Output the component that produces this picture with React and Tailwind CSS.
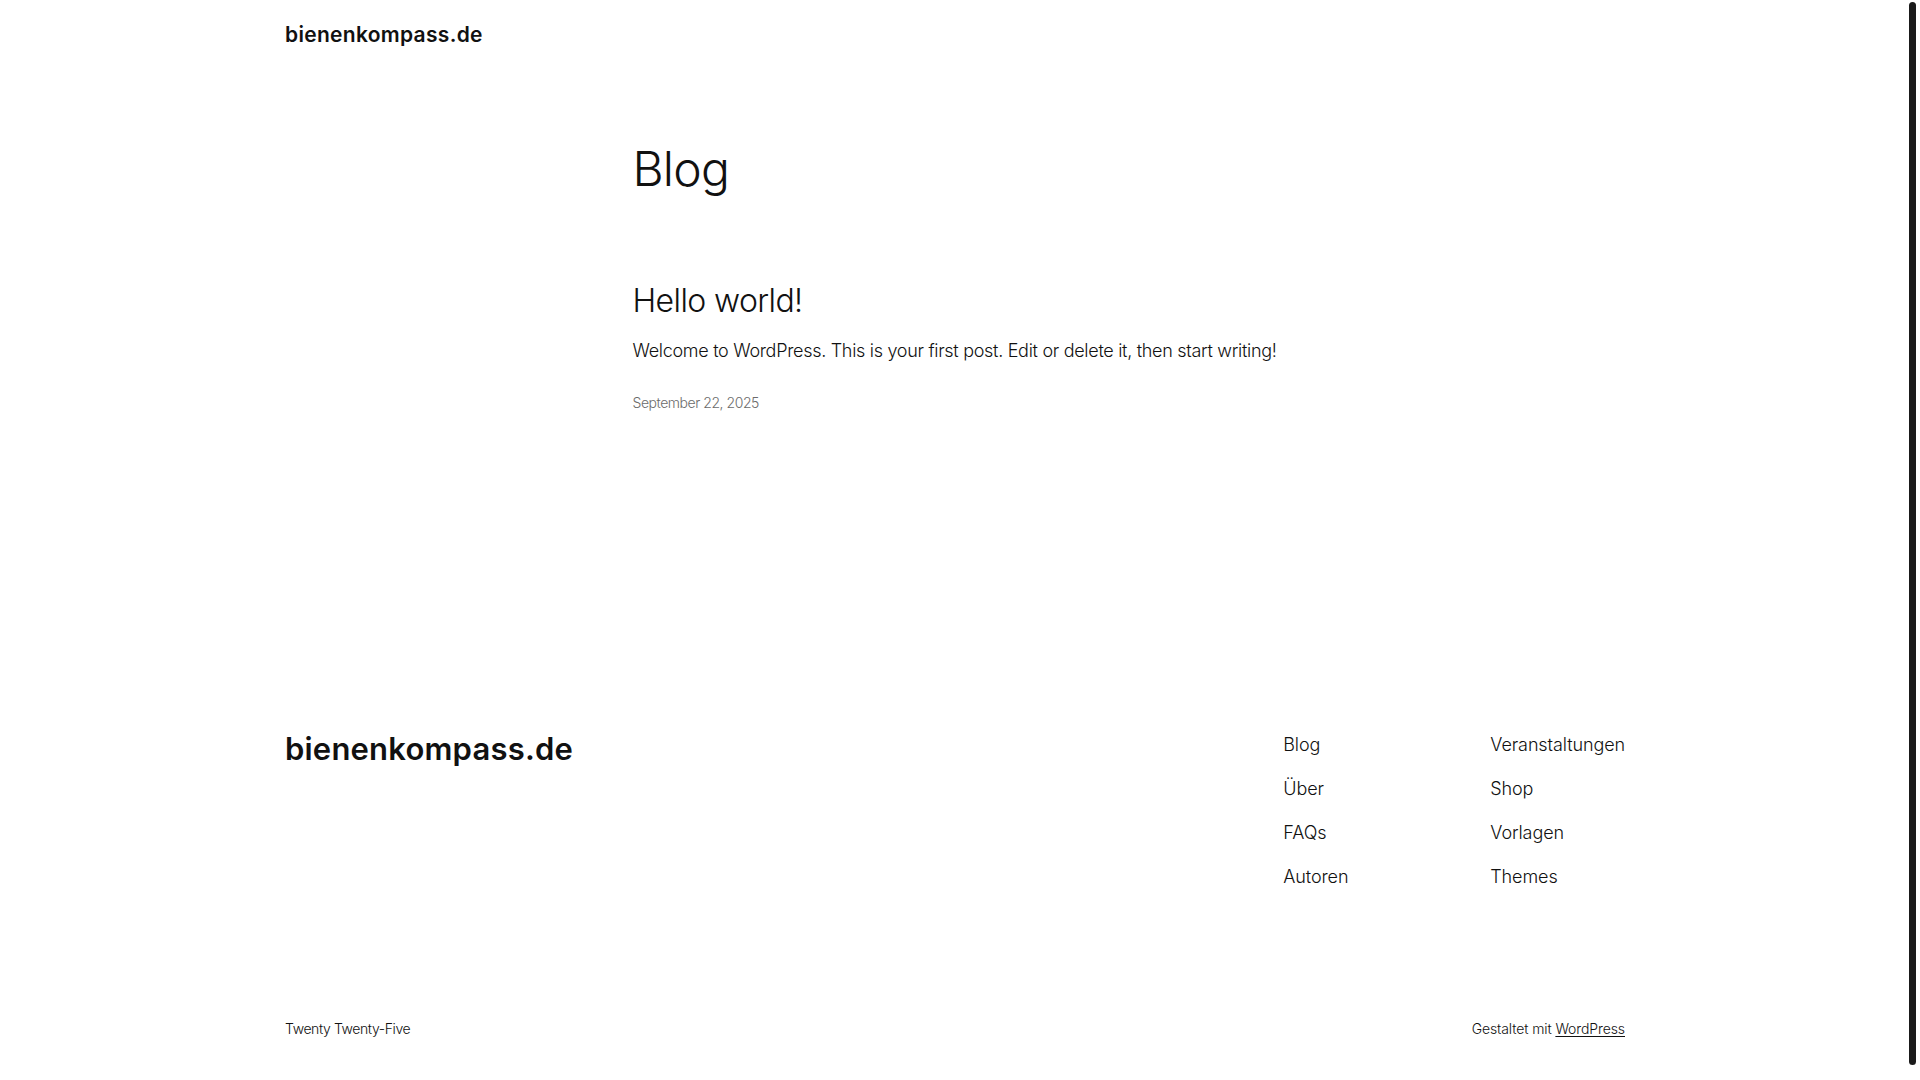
import React from "react";

const font = { fontFamily: "Inter, 'Noto Sans', 'Liberation Sans', sans-serif" };

const navLeft = ["Blog", "Über", "FAQs", "Autoren"];
const navRight = ["Veranstaltungen", "Shop", "Vorlagen", "Themes"];

function NavColumn({ items, className }) {
  return (
    <ul className={"flex flex-col gap-[17px] " + (className || "")}>
      {items.map((item) => (
        <li key={item}>
          <a href="#" className="text-[18px] leading-[27px] font-light text-[#111111] tracking-[-0.1px]">
            {item}
          </a>
        </li>
      ))}
    </ul>
  );
}

// fake browser scrollbar seen at the right edge of the screenshot
function Scrollbar() {
  return (
    <div className="flex h-full w-[15px] shrink-0 justify-center bg-white py-[2px]">
      <div className="h-[1063px] w-[7px] rounded-full bg-[#1a1a1a]" />
    </div>
  );
}

export default function App() {
  return (
    <div className="flex h-[1080px] overflow-hidden bg-white text-[#111111]" style={font}>
      <div className="min-w-0 flex-1 pl-[5px]">
        {/* header */}
        <header className="mx-auto flex h-[68px] w-[1340px] items-center">
          <a href="#" className="text-[21px] leading-none font-semibold tracking-[0.3px]">
            bienenkompass.de
          </a>
        </header>

        {/* main */}
        <main className="mx-auto w-[645px]">
          <h1 className="mt-[70px] text-[48px] leading-[61px] font-light tracking-[-0.8px]">Blog</h1>
          <article>
            <h2 className="mt-[83px] text-[32px] leading-[38px] font-light tracking-[-0.6px]">
              <a href="#">Hello world!</a>
            </h2>
            <p className="mt-[17px] text-[18px] leading-[27px] font-light tracking-[-0.3px]">
              Welcome to WordPress. This is your first post. Edit or delete it, then start writing!
            </p>
            <div className="mt-[28px] text-[14px] leading-[21px] font-light text-[#6b6b6b] tracking-[-0.45px]">
              September 22, 2025
            </div>
          </article>
        </main>

        {/* footer */}
        <footer className="mx-auto mt-[318px] w-[1340px]">
          <div className="flex items-start justify-between">
            <a href="#" className="mt-px text-[31px] leading-[34px] font-semibold tracking-[0.2px]">
              bienenkompass.de
            </a>
            <div className="flex">
              <NavColumn items={navLeft} className="w-[207px]" />
              <NavColumn items={navRight} />
            </div>
          </div>
          <div className="mt-[128px] flex items-center justify-between text-[14px] leading-[21px] font-light tracking-[-0.1px]">
            <span className="tracking-[-0.4px]">Twenty Twenty-Five</span>
            <span>
              Gestaltet mit{" "}
              <a href="#" className="underline underline-offset-2">
                WordPress
              </a>
            </span>
          </div>
        </footer>
      </div>
      <Scrollbar />
    </div>
  );
}
